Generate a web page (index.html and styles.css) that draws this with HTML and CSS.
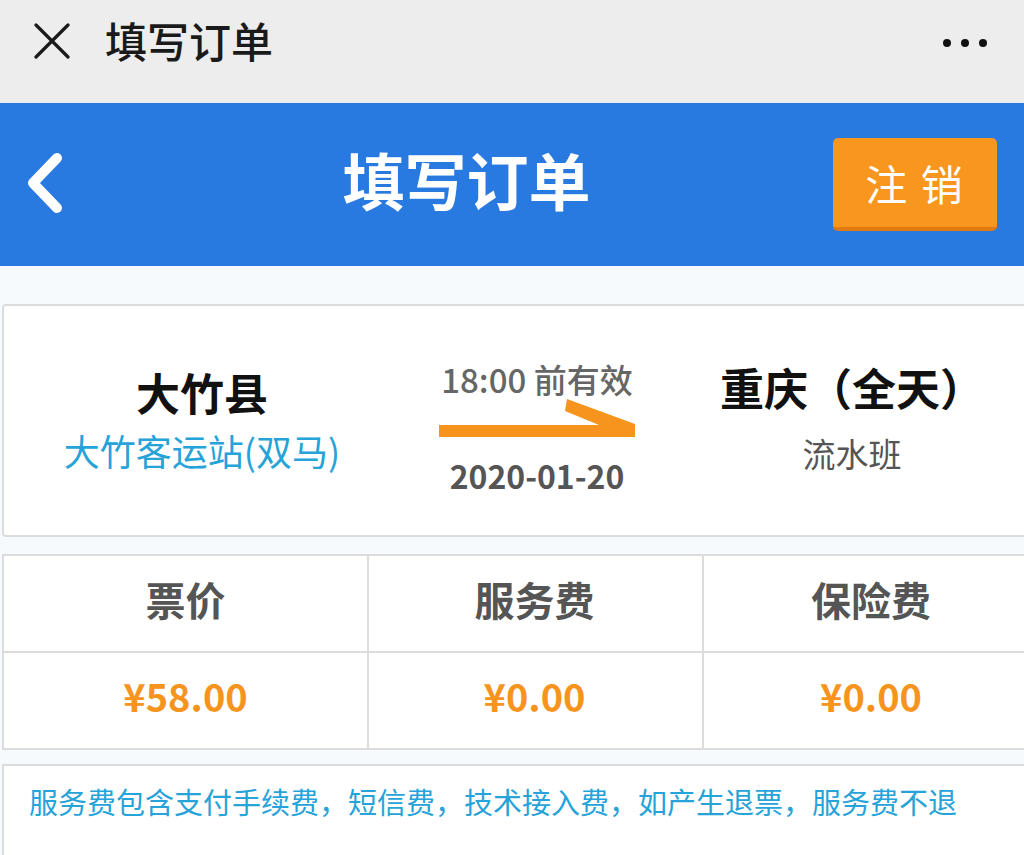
FILE: index.html
```html
<!DOCTYPE html>
<html lang="zh-CN">
<head>
  <meta charset="UTF-8">
  <meta name="viewport" content="width=device-width, initial-scale=1.0">
  <title>填写订单</title>
  <link rel="stylesheet" href="styles.css">
</head>
<body>
  <div class="topbar">
    <svg class="close-icon" width="36" height="36" viewBox="0 0 36 36">
      <path d="M2 2 L34 34 M34 2 L2 34" stroke="#1a1a1a" stroke-width="3.2" stroke-linecap="round" fill="none"/>
    </svg>
    <div class="topbar-title">填写订单</div>
    <div class="more">
      <span class="dot"></span><span class="dot"></span><span class="dot"></span>
    </div>
  </div>

  <div class="header">
    <div class="back">
      <svg width="40" height="62" viewBox="0 0 40 62">
        <path d="M33 6 L9 31 L33 56" stroke="#fff" stroke-width="10" stroke-linecap="round" stroke-linejoin="round" fill="none"/>
      </svg>
    </div>
    <div class="header-title">填写订单</div>
    <div class="cancel-btn">注 销</div>
  </div>

  <div class="content">
    <div class="route-card">
      <div class="route-col">
        <div class="city">大竹县</div>
        <div class="station">大竹客运站(双马)</div>
      </div>
      <div class="route-mid">
        <div class="valid">18:00 前有效</div>
        <svg class="arrow" width="196" height="40" viewBox="0 0 196 40">
          <polygon points="0,28 160,28 126,14 128,2 196,27 196,40 0,40" fill="#f7941d"/>
        </svg>
        <div class="date">2020-01-20</div>
      </div>
      <div class="route-col right">
        <div class="city">重庆（全天）</div>
        <div class="line-type">流水班</div>
      </div>
    </div>

    <div class="fee-table">
      <div class="cell label">票价</div>
      <div class="cell label">服务费</div>
      <div class="cell label">保险费</div>
      <div class="cell price">¥58.00</div>
      <div class="cell price">¥0.00</div>
      <div class="cell price">¥0.00</div>
    </div>

    <div class="notice">服务费包含支付手续费，短信费，技术接入费，如产生退票，服务费不退</div>
  </div>
</body>
</html>
```

FILE: styles.css
```css
body {
  margin: 0;
  font-family: "Noto Sans CJK SC", "Noto Sans", sans-serif;
  background-color: #f6fafc;
  overflow: hidden;
  width: 1024px;
  height: 855px;
}
.topbar {
  height: 103px;
  background-color: #ededed;
  display: flex;
  align-items: center;
}
.close-icon {
  margin-left: 34px;
  margin-top: -22px;
}
.topbar-title {
  margin-left: 35px;
  font-size: 42px;
  color: #1a1a1a;
  font-weight: 500;
  margin-top: -24px;
}
.more {
  margin-left: auto;
  margin-right: 37px;
  display: flex;
  gap: 10px;
  margin-top: -18px;
}
.dot {
  width: 8px;
  height: 8px;
  border-radius: 50%;
  background-color: #111;
}
.header {
  height: 163px;
  background-color: #2879e0;
  display: flex;
  align-items: center;
}
.back {
  width: 100px;
  padding-left: 24px;
  box-sizing: border-box;
  display: flex;
  margin-top: -4px;
}
.header-title {
  flex: 1;
  text-align: center;
  color: #fff;
  font-size: 62px;
  font-weight: 700;
  margin-top: -12px;
}
.cancel-btn {
  width: 164px;
  height: 93px;
  margin-right: 27px;
  margin-top: 0;
  box-sizing: border-box;
  background-color: #f8961d;
  border-bottom: 4px solid #e27a12;
  border-radius: 5px;
  color: #fff;
  font-size: 42px;
  display: flex;
  align-items: center;
  justify-content: center;
  letter-spacing: 2px;
}
.content {
  padding-top: 38px;
}
.route-card {
  margin-left: 2px;
  width: 1040px;
  height: 233px;
  box-sizing: border-box;
  background-color: #fff;
  border: 2px solid #dcdcdc;
  border-radius: 4px;
  display: grid;
  grid-template-columns: 396px 274px 356px;
  align-items: center;
}
.route-col {
  text-align: center;
}
.city {
  font-size: 44px;
  font-weight: 700;
  color: #111;
  line-height: 60px;
  margin-top: -6px;
}
.route-col.right .city {
  font-size: 44px;
  margin-top: -10px;
}
.station {
  font-size: 36px;
  color: #26a3d8;
  line-height: 48px;
  margin-top: 4px;
}
.line-type {
  font-size: 33px;
  color: #555;
  line-height: 44px;
  margin-top: 14px;
}
.route-mid {
  display: flex;
  flex-direction: column;
  align-items: center;
  margin-top: 12px;
}
.valid {
  font-size: 33px;
  color: #666;
  font-weight: 500;
  line-height: 40px;
}
.arrow {
  margin-top: -2px;
}
.date {
  font-size: 32px;
  color: #555;
  font-weight: 700;
  line-height: 40px;
  margin-top: 18px;
}
.fee-table {
  margin-top: 17px;
  margin-left: 2px;
  width: 1040px;
  box-sizing: border-box;
  background-color: #fff;
  border: 2px solid #dcdcdc;
  display: grid;
  grid-template-columns: 363px 335px 1fr;
}
.cell {
  height: 97px;
  display: flex;
  align-items: center;
  justify-content: center;
  border-right: 2px solid #dcdcdc;
  border-bottom: 2px solid #dcdcdc;
  margin-right: -2px;
  box-sizing: border-box;
  padding-bottom: 10px;
}
.cell:nth-child(n+4) {
  border-bottom: none;
  height: 95px;
}
.label {
  font-size: 40px;
  font-weight: 700;
  color: #555;
}
.price {
  font-size: 38px;
  font-weight: 700;
  color: #f7941d;
}
.notice {
  margin-top: 14px;
  margin-left: 2px;
  width: 1040px;
  height: 100px;
  box-sizing: border-box;
  background-color: #fff;
  border: 2px solid #dcdcdc;
  padding: 14px 0 0 25px;
  font-size: 29px;
  color: #26a3d8;
}
```
